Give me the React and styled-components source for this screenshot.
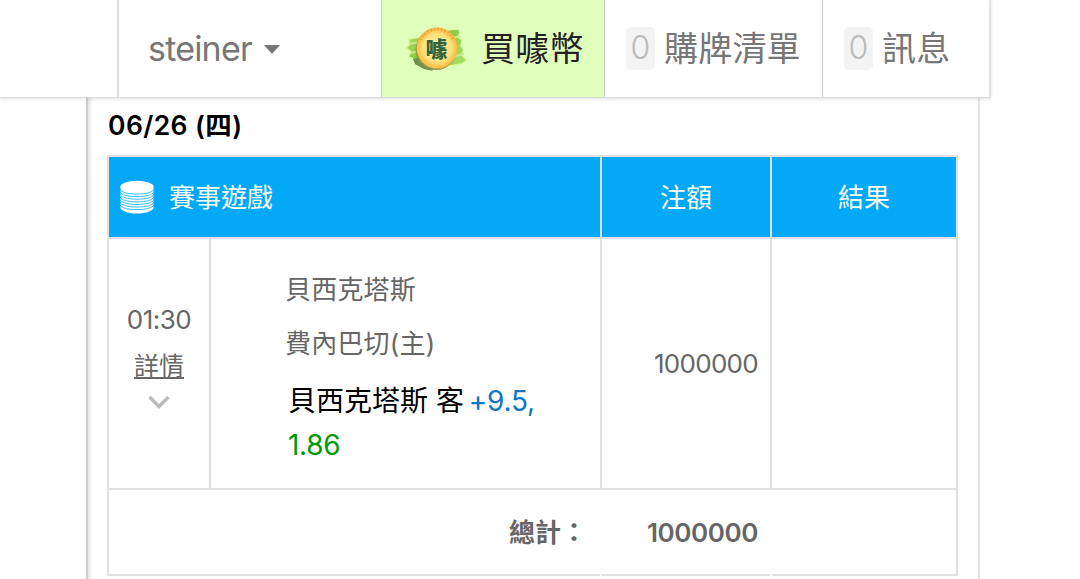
import React from 'react'

import styled, { createGlobalStyle } from "styled-components";

const GlobalStyle = createGlobalStyle`
  * {
    box-sizing: border-box;
  }
  body {
    margin: 0;
    background: #fff;
    font-family: Inter, "Noto Sans CJK TC", sans-serif;
    color: #666;
    overflow: hidden;
  }
`;

const Page = styled.div`
  height: 579px;
  overflow: hidden;
`;

const Nav = styled.nav`
  position: relative;
  z-index: 1;
  display: flex;
  justify-content: flex-end;
  width: 991px;
  height: 98px;
  background: #fff;
  border-right: 2px solid #e2e2e2;
  border-bottom: 1px solid #dcdcdc;
  box-shadow: 0 1px 3px rgba(0, 0, 0, 0.12);
`;

const NavItem = styled.div`
  display: flex;
  align-items: center;
  width: ${({ $width }) => $width}px;
  padding: 1px 0 0 ${({ $pad }) => $pad}px;
  border-left: ${({ $line }) => $line || "1px solid #ccc"};
  background: ${({ $active }) => ($active ? "#e0ffbc" : "#fff")};
  color: ${({ $active }) => ($active ? "#222" : "#777")};
  font-size: 34px;
  line-height: 48px;
  white-space: nowrap;
`;

const UserName = styled.span`
  letter-spacing: -0.8px;
`;

const NavLabel = styled.span`
  margin-left: ${({ $gap }) => $gap}px;
  letter-spacing: 0.2px;
`;

const Caret = styled.span`
  margin-left: 12px;
  border: 8.5px solid transparent;
  border-top: 9px solid #777;
  border-bottom: 0;
`;

const Badge = styled.span`
  display: flex;
  align-items: center;
  justify-content: center;
  width: 29px;
  height: 43px;
  margin-top: -2px;
  border-radius: 5px;
  background: #f3f3f3;
  color: #bbb;
  font-size: 32px;
  font-weight: 300;
`;

const Panel = styled.main`
  width: 894px;
  height: 500px;
  margin-left: 86px;
  padding: 9px 0 0 20px;
  border-left: 2px solid #ccc;
  border-right: 2px solid #e4e4e4;
  box-shadow: inset 4px 0 4px -2px rgba(0, 0, 0, 0.12);
`;

const DateTitle = styled.h4`
  margin: 0 0 12px;
  color: #000;
  font-size: 26.5px;
  font-weight: 600;
  line-height: 36px;
  letter-spacing: 0.4px;
`;

const Table = styled.section`
  width: 851px;
  margin-left: -1px;
  border: solid #e0e0e0;
  border-width: 2px 2px 0;
`;

const Row = styled.div`
  display: grid;
  grid-template-columns: ${({ $cols }) => $cols};
  column-gap: 2px;
  height: ${({ $height }) => $height}px;
  background: #e0e0e0;
  border-bottom: 2px solid #e0e0e0;
`;

const HeadCell = styled.div`
  display: flex;
  align-items: center;
  justify-content: ${({ $left }) => ($left ? "flex-start" : "center")};
  gap: 15px;
  padding: 2px 0 0 ${({ $left }) => ($left ? 11 : 0)}px;
  background: #03a9f7;
  color: #fff;
  font-size: 26px;
  line-height: 36px;
`;

const Cell = styled.div`
  background: #fff;
  font-size: 26px;
`;

const TimeCell = styled(Cell)`
  display: flex;
  flex-direction: column;
  align-items: center;
  padding-top: 63px;
  line-height: 36px;
`;

const Time = styled.span`
  letter-spacing: -0.5px;
`;

const DetailLink = styled.a`
  margin-top: 10px;
  font-size: 25px;
  text-decoration: underline;
  text-decoration-thickness: 2px;
  text-underline-offset: 2px;
`;

const Chevron = styled.svg`
  margin-top: 11px;
`;

const MatchCell = styled(Cell)`
  padding: 33px 30px 0 74px;
`;

const Team = styled.p`
  margin: 0 0 18px;
  line-height: 36px;
  letter-spacing: 0.2px;
`;

const Bet = styled.p`
  margin: -1px 0 0 3px;
  color: #000;
  font-size: 28px;
  line-height: 44px;
`;

const Handicap = styled.span`
  margin-left: -3px;
  color: #0f75c5;
  letter-spacing: -0.2px;
`;

const Odds = styled.span`
  display: block;
  color: #090;
  letter-spacing: -0.3px;
`;

const Amount = styled(Cell)`
  display: flex;
  align-items: center;
  justify-content: flex-end;
  padding-right: 12px;
  letter-spacing: -0.7px;
`;

const TotalRow = styled.div`
  display: grid;
  grid-template-columns: 491px 168px 1fr;
  column-gap: 2px;
  height: 86px;
`;

const TotalCell = styled.div`
  display: flex;
  align-items: center;
  justify-content: flex-end;
  padding: 2px ${({ $pad }) => $pad}px 0 0;
  border-bottom: 2px solid #e0e0e0;
  font-size: 26px;
  font-weight: 600;
  line-height: 36px;
  letter-spacing: -0.4px;
`;

const TotalLabel = styled(TotalCell)`
  letter-spacing: 0;
`;

// stack of coins in the table head
const CoinStack = () => (
  <svg width="34" height="36" viewBox="0 0 34 36">
    <path d="M0.5 6.500v21c0 3.3 7.4 6 16.5 6s16.5-2.700 16.5-6v-21z" fill="#fff" />
    {[9, 11.6, 14.2, 16.8, 19.4, 22, 24.6].map((y) => (
      <path
        key={y}
        d={`M0 ${y}c1 3.3 7.8 5 17 5s16-1.700 17-5`}
        fill="none"
        stroke="#03a9f7"
        strokeWidth="0.8"
      />
    ))}
    <ellipse cx="17" cy="6.5" rx="16.5" ry="5.8" fill="#fff" />
  </svg>
);

const CoinLogo = () => (
  <svg width="62" height="50" viewBox="0 0 62 50">
    <defs>
      <radialGradient id="gold">
        <stop offset="0" stopColor="#fff3a8" />
        <stop offset="0.7" stopColor="#ffe07a" />
        <stop offset="1" stopColor="#fbb83c" />
      </radialGradient>
      <linearGradient id="brush" x1="0" y1="0" x2="1" y2="0.3">
        <stop offset="0" stopColor="#b4e572" />
        <stop offset="0.5" stopColor="#75bd35" />
        <stop offset="1" stopColor="#a4dc60" />
      </linearGradient>
    </defs>
    <path
      d="M3 15L16 13 30 7 54 5 55 9 53 13 57 16 56 22 59 26 57 31 62 36 57 40 44 42 23 45 9 40 11 36 3 33 6 28 1 24 5 20z"
      fill="url(#brush)"
      stroke="#dcf9a6"
      strokeWidth="1.5"
    />
    <path d="M4 20L15 18M5 29L15 27M48 14L55 12M50 32L59 30" stroke="#c6ed85" strokeWidth="2" />
    <path d="M8 35l8-2 12 14-9-2-9-5z" fill="#6f8f50" />
    <circle cx="31" cy="25.5" r="20.5" fill="#8a9a48" />
    <circle cx="32" cy="24" r="20.5" fill="url(#gold)" />
    <path
      d="M15.500 16a18 18 0 0 1 33 0"
      fill="none"
      stroke="#ee9c38"
      strokeWidth="3"
      strokeDasharray="2 1.5"
      opacity="0.7"
    />
    <text
      x="31.5"
      y="33"
      textAnchor="middle"
      fontFamily="Noto Sans CJK TC, sans-serif"
      fontSize="22"
      fontWeight="900"
      fill="#37653a"
      stroke="#eef7b0"
      strokeWidth="0.8"
      paintOrder="stroke"
    >
      噱
    </text>
  </svg>
);

const App = () => {
  return (
    <Page>
      <GlobalStyle />
      <Nav>
        <NavItem $width={264} $pad={29} $line="2px solid #e0e0e0">
          <UserName>steiner</UserName>
          <Caret />
        </NavItem>
        <NavItem $width={223} $pad={23} $active>
          <CoinLogo />
          <NavLabel $gap={14}>買噱幣</NavLabel>
        </NavItem>
        <NavItem $width={218} $pad={21}>
          <Badge>0</Badge>
          <NavLabel $gap={9}>購牌清單</NavLabel>
        </NavItem>
        <NavItem $width={167} $pad={21}>
          <Badge>0</Badge>
          <NavLabel $gap={9}>訊息</NavLabel>
        </NavItem>
      </Nav>
      <Panel>
        <DateTitle>06/26 (四)</DateTitle>
        <Table>
          <Row $cols="491px 168px 1fr" $height={82}>
            <HeadCell $left>
              <CoinStack />
              賽事遊戲
            </HeadCell>
            <HeadCell>注額</HeadCell>
            <HeadCell>結果</HeadCell>
          </Row>
          <Row $cols="100px 389px 168px 1fr" $height={251}>
            <TimeCell>
              <Time>01:30</Time>
              <DetailLink>詳情</DetailLink>
              <Chevron width="22" height="14" viewBox="0 0 22 14">
                <path d="M1.5 2l9.5 9.5L20.5 2" fill="none" stroke="#bbb" strokeWidth="3.5" />
              </Chevron>
            </TimeCell>
            <MatchCell>
              <Team>貝西克塔斯</Team>
              <Team>費內巴切(主)</Team>
              <Bet>
                貝西克塔斯 客 <Handicap>+9.5,</Handicap>
                <Odds>1.86</Odds>
              </Bet>
            </MatchCell>
            <Amount>1000000</Amount>
            <Cell />
          </Row>
          <TotalRow>
            <TotalLabel $pad={13}>總計：</TotalLabel>
            <TotalCell $pad={12}>1000000</TotalCell>
            <TotalCell />
          </TotalRow>
        </Table>
      </Panel>
    </Page>
  )
}

export default App
